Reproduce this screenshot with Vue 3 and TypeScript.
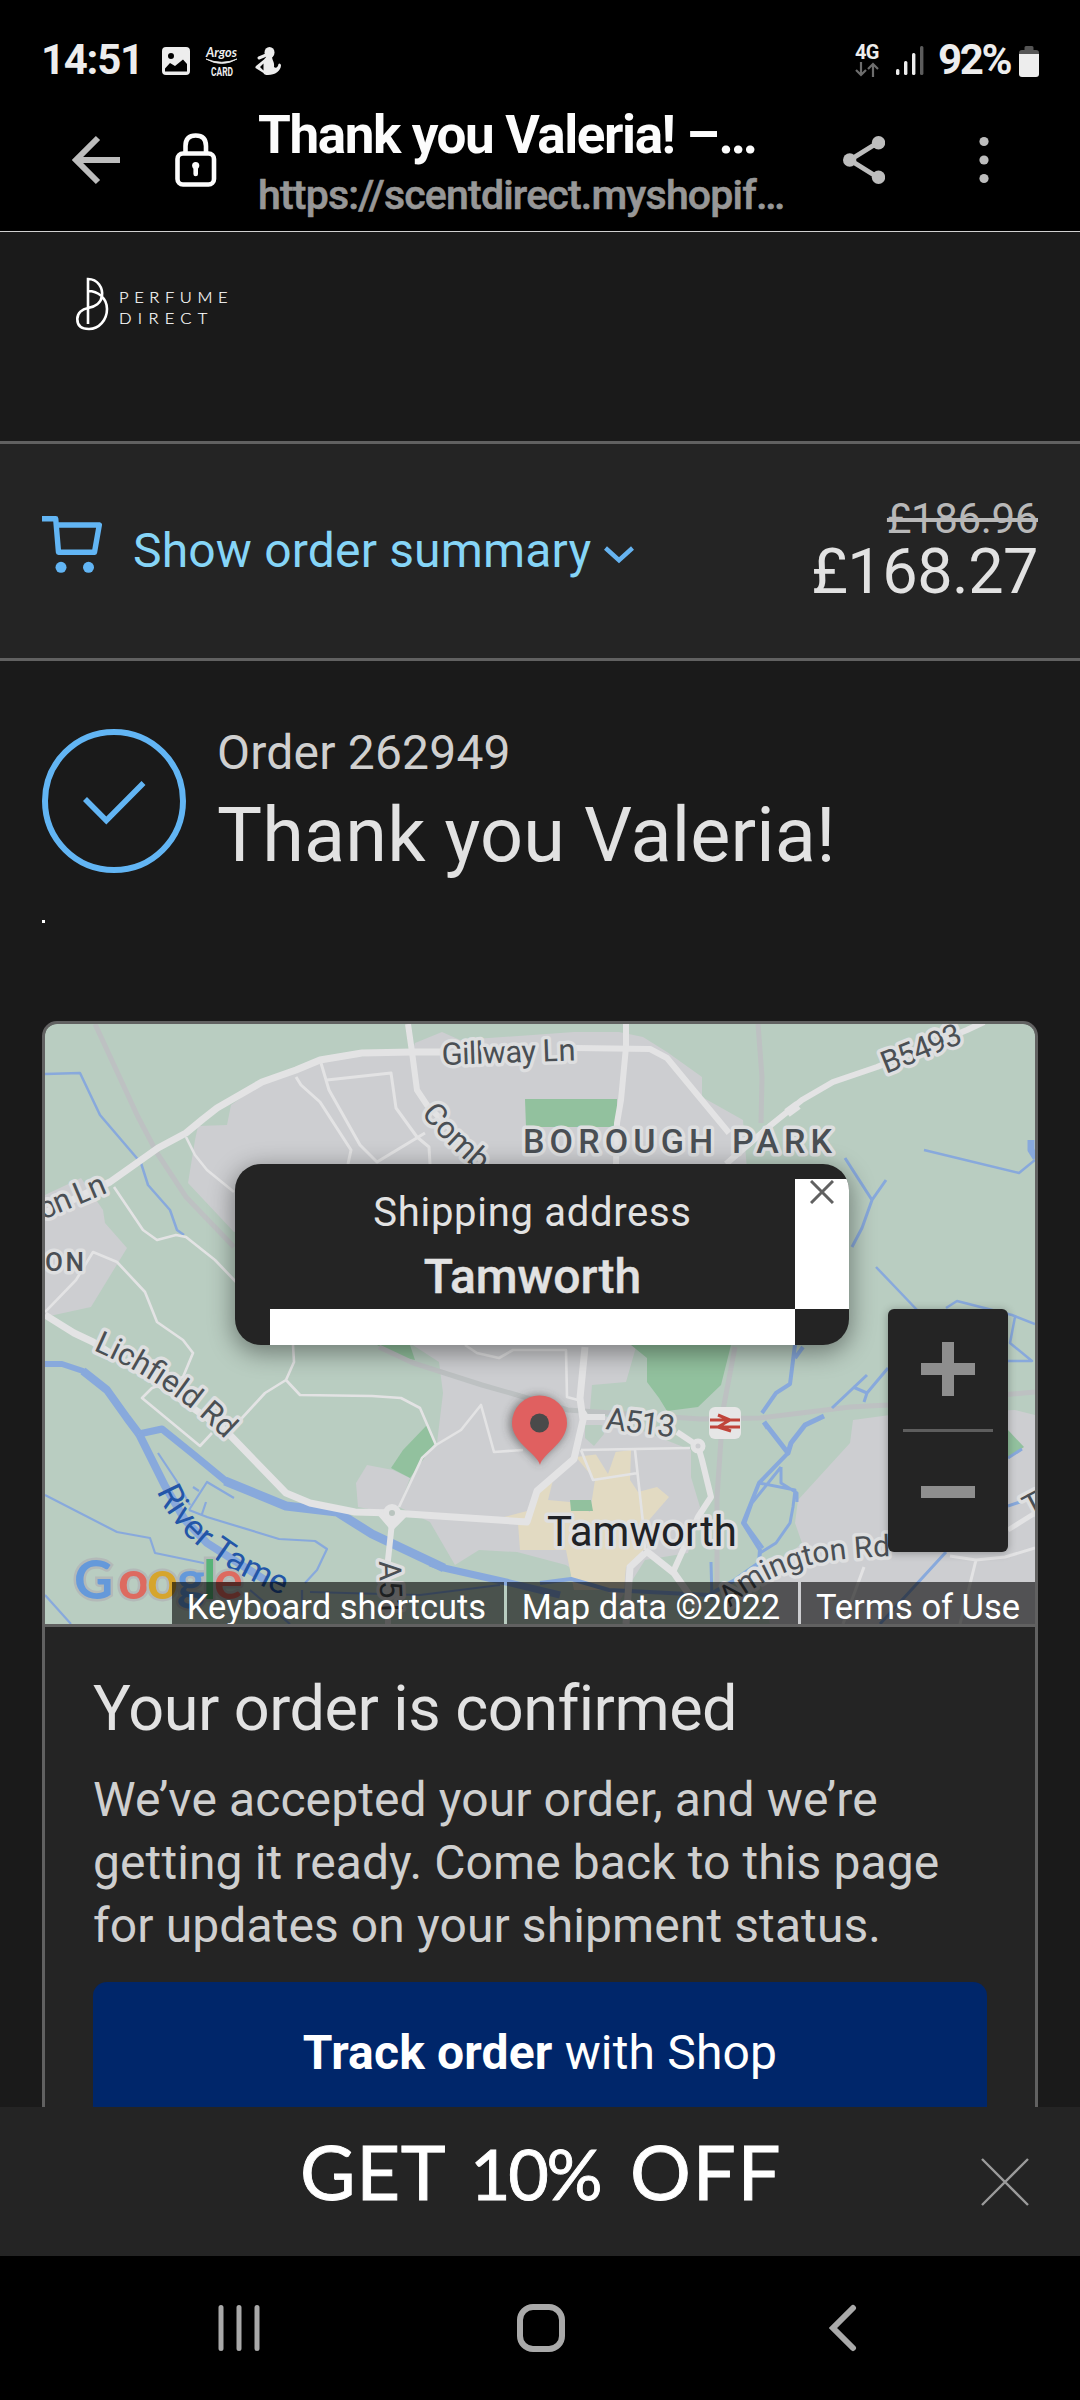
<script setup lang="ts">
interface MapPath {
  d: string
  w: number
}

const areas: string[] = [
  'M415 1043L442 1032L460 1040L574 1032L619 1032L643 1037L667 1052L702 1077L702 1097L743 1120L747 1170L234 1232L188 1183L195 1140L198 1126L227 1125L231 1105L262 1083L321 1060L412 1052Z',
  'M45 1195L81 1178L103 1210L105 1223L127 1248L91 1307L45 1317Z',
  'M405 1340L439 1362L443 1393L437 1443L422 1457L399 1507L430 1522L455 1565L479 1550L517 1552L566 1565L620 1600L645 1560L688 1553L700 1507L691 1477L691 1450L590 1410L592 1385L626 1382L638 1340Z',
  'M356 1483L367 1465L393 1470L410 1478L399 1507L390 1513L358 1507Z',
  'M890 1415L853 1420L850 1443L798 1500L795 1523L802 1543L760 1582L770 1624L1035 1624L1035 1415L1015 1410Z',
]

const parks: string[] = [
  'M525 1099H617V1127H526Z',
  'M377 1345H410L415 1360L400 1357Z',
  'M427 1425L435 1443L410 1478L391 1468L403 1450Z',
  'M631 1345H731L721 1385L698 1407L667 1411L659 1398L647 1382V1358Z',
  'M1008 1430L1024 1447L1008 1458Z',
]

const railways: string[] = [
  'M95 1024L138 1117L157 1153L186 1197L234 1247',
  'M379 1347L413 1363L482 1385L517 1395L568 1410L700 1419L760 1418L850 1407L888 1405L1035 1392',
  'M758 1024L762 1077L761 1123',
  'M735 1347L723 1410L717 1497V1600',
]

const waters: MapPath[] = [
  { d: 'M45 1074L80 1073L100 1115L141 1163L148 1185L170 1210L177 1230L184 1235', w: 2.5 },
  { d: 'M845 1158L872 1200L886 1180M872 1200L862 1228L852 1247', w: 3 },
  { d: 'M924 1150L1019 1173L1035 1160', w: 2.5 },
  { d: 'M1031 1140V1150L1036 1158', w: 7 },
  { d: 'M876 1267L919 1312M946 1308L957 1301L1012 1315L1035 1324M1015 1317L1010 1343L1032 1361H1006', w: 2.5 },
  { d: 'M45 1364H62L83 1371L107 1390L127 1418L139 1434', w: 6 },
  { d: 'M83 1371L107 1390L127 1418L139 1434', w: 8 },
  { d: 'M139 1434L162 1429L193 1454L227 1482L286 1506L337 1512', w: 7 },
  { d: 'M225 1481L286 1506L337 1512L372 1534L444 1568', w: 9 },
  { d: 'M430 1563L444 1568L506 1582L560 1595', w: 7 },
  { d: 'M139 1434L165 1486L185 1520L207 1543L265 1580', w: 8 },
  { d: 'M45 1495L117 1532L150 1538L155 1553L213 1565M45 1595L71 1624', w: 2.2 },
  { d: 'M158 1453L176 1480L190 1505M189 1510L207 1482L234 1498M189 1510L207 1517L279 1539L315 1541L327 1549L317 1570L305 1583M202 1514L206 1502M193 1487L199 1491', w: 2.2 },
  { d: 'M250 1590L290 1624M302 1590V1615M310 1592L420 1595L500 1585', w: 2.2 },
  { d: 'M795 1345L790 1384L776 1393L762 1413M803 1347L795 1358', w: 4 },
  { d: 'M764 1422L788 1453L791 1443L805 1425L824 1416M764 1422L768 1428', w: 5 },
  { d: 'M832 1408L867 1375M888 1368L867 1393L853 1387M867 1393L864 1402', w: 3 },
  { d: 'M788 1453L759 1483L743 1523L760 1550L759 1563L735 1580', w: 4 },
  { d: 'M781 1467V1483L797 1493V1502M759 1483L795 1490L793 1507L790 1523L776 1543L760 1553M781 1467L752 1503L745 1523L763 1548', w: 3 },
  { d: 'M711 1562L712 1600M946 1552L880 1624M1035 1497L1008 1506M1008 1458L1022 1449', w: 3 },
  { d: 'M540 1583L571 1579L609 1590L709 1595L735 1580', w: 4 },
]

const roads: MapPath[] = [
  { d: 'M45 1213L110 1182L158 1148L186 1133L203 1119L217 1108L262 1082L296 1070L320 1060L362 1053L412 1052L444 1052', w: 7 },
  { d: 'M408 1024L412 1052L417 1090L427 1105L487 1166', w: 6 },
  { d: 'M321 1063L329 1090L360 1145L377 1162L425 1133M327 1080L391 1073L396 1108L417 1137L429 1147L430 1164M296 1077L301 1085L320 1102L351 1150L348 1164', w: 3 },
  { d: 'M186 1137L195 1155L207 1170L234 1192M114 1187L143 1230L157 1240L176 1235L186 1237L215 1260L236 1282', w: 2.6 },
  { d: 'M45 1312L76 1280L93 1252L117 1262L145 1292L157 1322L183 1340L193 1353L183 1377L152 1388L142 1398L200 1446L212 1433', w: 2.6 },
  { d: 'M626 1024V1047L621 1100L617 1123L616 1164', w: 6 },
  { d: 'M576 1048L650 1049L667 1058L729 1133', w: 6 },
  { d: 'M726 1164L771 1125L802 1100L833 1082L877 1067L967 1030L984 1022', w: 6 },
  { d: 'M787 1113L798 1105', w: 9 },
  { d: 'M45 1315L74 1333L93 1342L160 1385L227 1432L286 1493L310 1503L355 1512L393 1513L527 1522L537 1491L574 1459L583 1420L580 1398L585 1347', w: 7 },
  { d: 'M393 1513L388 1560V1624M583 1412L586 1417L605 1417M677 1432L698 1446L702 1460L711 1497L698 1517L674 1570', w: 6 },
  { d: 'M380 1513L392 1527L405 1514', w: 6 },
  { d: 'M293 1345L294 1362L286 1380L265 1393L231 1430M286 1380L300 1395L372 1396L401 1398L420 1408L436 1445L422 1458L399 1507M436 1445L461 1430L481 1405L494 1452L523 1450', w: 2.6 },
  { d: 'M465 1345L477 1353L499 1358L513 1350L566 1350L567 1397L578 1400M581 1450L690 1448M635 1450L643 1523L645 1550M581 1450L593 1480L638 1473', w: 2.6 },
  { d: 'M645 1550L674 1573L700 1610M645 1553L630 1567L626 1624', w: 7 },
  { d: 'M1035 1513L1008 1530', w: 5 },
  { d: 'M1035 1548L1005 1557L976 1560L950 1556M976 1560L960 1624M864 1567L843 1624', w: 3 },
]

const signalBars = [
  { x: 0, y: 24, h: 6, on: true },
  { x: 8, y: 16, h: 14, on: true },
  { x: 16, y: 8, h: 22, on: true },
  { x: 24, y: 1, h: 29, on: false },
]

const attribution = ['Keyboard shortcuts', 'Map data ©2022', 'Terms of Use']
</script>

<template>
  <div class="screen">
    <header class="status">
      <span class="time">14:51</span>
      <svg class="s-img" width="28" height="28" viewBox="0 0 28 28">
        <path fill="#ededed" fill-rule="evenodd" d="M4 0H24A4 4 0 0 1 28 4V24A4 4 0 0 1 24 28H4A4 4 0 0 1 0 24V4A4 4 0 0 1 4 0ZM9 6A3 3 0 1 0 9 12A3 3 0 1 0 9 6ZM3 24.500H25V17L21 12.500L13 19L8 16L3 21.500Z" />
      </svg>
      <svg class="s-argos" width="34" height="32" viewBox="0 0 34 32">
        <text x="1" y="12" class="argos" textLength="31" lengthAdjust="spacingAndGlyphs">Argos</text>
        <path d="M1 14Q17 23 32 14Q17 20.500 1 14Z" fill="#eee" stroke="#eee" stroke-width=".8" />
        <text x="6" y="30.500" class="card-t" textLength="22" lengthAdjust="spacingAndGlyphs">CARD</text>
      </svg>
      <svg class="s-fig" width="27" height="28" viewBox="0 0 27 28">
        <ellipse cx="14.500" cy="5.500" rx="5" ry="5.500" fill="#ededed" />
        <path d="M4 11L10 8.500" stroke="#ededed" stroke-width="3" stroke-linecap="round" />
        <path fill="#ededed" fill-rule="evenodd" d="M12 9H17.500C16 12 20 15 19 20C21 22 23 20 23.500 17Q25 15.500 26 18C26 24 20 28 13 28Q9 28 8.500 26L.5 21Q0 20 1 19L9 12.500ZM8.500 16.500L5 20L8.500 23.500Z" />
      </svg>
      <div class="status-right">
        <div class="net">
          <span class="g4">4G</span>
          <svg width="24" height="15" viewBox="0 0 24 15" fill="none" stroke="#6d6d6d" stroke-width="2.200">
            <path d="M6 0V13M1 8L6 13L11 8M18 15V2M13 7L18 2L23 7" />
          </svg>
        </div>
        <svg class="signal" width="28" height="30" viewBox="0 0 28 30">
          <rect v-for="b in signalBars" :key="b.x" :x="b.x" :y="b.y" width="3.400" :height="b.h" rx="1.500" :fill="b.on ? '#ededed' : '#5c5c5c'" />
        </svg>
        <span class="pct">92%</span>
        <svg width="20" height="31" viewBox="0 0 20 31">
          <path d="M0 9V7Q0 4 3 4H5.500V1.500Q5.500 0 7 0H13Q14.500 0 14.500 1.500V4H17Q20 4 20 7V9Z" fill="#555" />
          <path d="M0 8H20V28Q20 31 17 31H3Q0 31 0 28Z" fill="#ededed" />
        </svg>
      </div>
    </header>

    <div class="toolbar">
      <svg class="t-back" width="50" height="50" viewBox="0 0 50 50" fill="none" stroke="#bdbdbd" stroke-width="6">
        <path d="M27 3L5 25L27 47M5 25H49" />
      </svg>
      <svg class="t-lock" width="42" height="54" viewBox="0 0 42 54" fill="none" stroke="#fcfcfc" stroke-width="4.600">
        <rect x="2.500" y="20.500" width="36.500" height="31" rx="5.500" />
        <path d="M10.500 20V13Q10.500 2.500 20.700 2.500Q31 2.500 31 13V20" />
        <circle cx="20.700" cy="32.500" r="3.600" fill="#fcfcfc" stroke="none" />
        <path d="M20.700 33V41" stroke-linecap="round" />
      </svg>
      <div class="titles">
        <span class="title">Thank you Valeria! –…</span>
        <span class="url">https://scentdirect.myshopif…</span>
      </div>
      <svg class="t-share" width="42" height="48" viewBox="0 0 42 48" fill="#bdbdbd">
        <path d="M35 6.500L7 24L35 41.500" fill="none" stroke="#bdbdbd" stroke-width="5" />
        <circle cx="35.500" cy="6.700" r="6.700" /><circle cx="6.700" cy="24" r="6.700" /><circle cx="35.500" cy="41.300" r="6.700" />
      </svg>
      <svg class="t-more" width="10" height="48" viewBox="0 0 10 48" fill="#bdbdbd">
        <circle cx="5" cy="5.500" r="4.600" /><circle cx="5" cy="24" r="4.600" /><circle cx="5" cy="42.500" r="4.600" />
      </svg>
    </div>

    <main class="page">
      <div class="brand">
        <svg width="34" height="54" viewBox="75 277 34 54" fill="none" stroke="#fff" stroke-width="2.600">
          <path d="M88 324V279C98 279 103 288 102 296C101 303 95 307 88 308C82 309 77.300 313 77.300 319C77.300 326 82 329 89 329C99 329 107 320 107 309C107 298 98 291 88 291" />
        </svg>
        <div class="brand-name"><span class="b1">PERFUME</span><span class="b2">DIRECT</span></div>
      </div>

      <section class="summary">
        <svg class="cart" width="60" height="58" viewBox="42 516 60 58" fill="none" stroke="#62b5f4" stroke-width="5.400" stroke-linejoin="round">
          <path d="M42 518.700H55.700L58.500 552.300H94.500L99.300 525H56.500" />
          <circle cx="61" cy="567.300" r="5.500" fill="#62b5f4" stroke="none" /><circle cx="88.500" cy="567.300" r="5.500" fill="#62b5f4" stroke="none" />
        </svg>
        <span class="show">Show order summary</span>
        <svg class="chev" width="30" height="18" viewBox="0 0 30 18" fill="none" stroke="#66b3f0" stroke-width="4.400">
          <path d="M1.500 2L15 14.200L28.500 2" />
        </svg>
        <div class="prices"><s class="old">£186.96</s><span class="new">£168.27</span></div>
      </section>

      <section class="thanks">
        <svg width="144" height="144" viewBox="0 0 144 144" fill="none" stroke="#62b5f4">
          <circle cx="72" cy="72" r="69" stroke-width="6" />
          <path d="M43 70L64.300 91.500L101.500 54" stroke-width="5.600" />
        </svg>
        <div class="thanks-text">
          <span class="order-no">Order 262949</span>
          <h1>Thank you Valeria!</h1>
        </div>
      </section>
      <div class="speck"></div>

      <section class="card">
        <div class="map">
          <svg class="map-art" width="990" height="600" viewBox="45 1024 990 600">
            <defs>
              <path id="lbl-comb" d="M421 1114Q448 1148 500 1190" />
              <path id="lbl-lich" d="M93 1350Q172 1384 234 1448" />
              <path id="lbl-river" d="M157 1491Q182 1560 315 1608" />
              <path id="lbl-aming" d="M730 1608Q772 1566 846 1559T910 1562" />
              <filter id="soft" x="-50%" y="-50%" width="200%" height="200%"><feGaussianBlur stdDeviation="4" /></filter>
            </defs>
            <rect x="45" y="1024" width="990" height="600" fill="#b9cdc1" />
            <path v-for="d in areas" :key="d" :d="d" fill="#cdced1" />
            <path v-for="d in parks" :key="d" :d="d" fill="#92c19e" />
            <path fill="#e2dac2" d="M576 1457L631 1450L630 1480L638 1492L657 1487L669 1497L643 1527L647 1547L626 1567L624 1590H574L566 1550H520L518 1523L504 1517L527 1511L545 1480L553 1480L548 1500L570 1502L590 1512L595 1480Z" />
            <path fill="#cdced1" d="M595 1453L608 1474L616 1451Z" />
            <path fill="#92c19e" d="M570 1500H591L593 1511H571Z" />
            <path fill="#b9cdc1" d="M585 1425L602 1425L604 1434L594 1446L585 1438Z" />
            <path v-for="d in railways" :key="d" :d="d" fill="none" stroke="#bdc1c2" stroke-width="5" />
            <path v-for="p in waters" :key="p.d" :d="p.d" fill="none" stroke="#88a9dc" :stroke-width="p.w" stroke-linejoin="round" />
            <path v-for="p in roads" :key="p.d" :d="p.d" fill="none" stroke="#e3e3e4" :stroke-width="p.w" stroke-linejoin="round" />
            <circle cx="392" cy="1513" r="6" fill="#b9c4bf" stroke="#e3e3e4" stroke-width="6" />
            <circle cx="698" cy="1446" r="5" fill="#cdced1" stroke="#e3e3e4" stroke-width="5" />

            <g class="lbl">
              <text transform="translate(442 1065) rotate(-2)" textLength="134">Gillway Ln</text>
              <text><textPath href="#lbl-comb">Comb</textPath></text>
              <text x="523" y="1153" class="area" font-size="34" textLength="309">BOROUGH PARK</text>
              <text transform="translate(886 1074) rotate(-22)" textLength="84">B5493</text>
              <text transform="translate(43 1220) rotate(-23)" textLength="71">on Ln</text>
              <text x="45" y="1271" class="area" font-size="26" textLength="39">ON</text>
              <text><textPath href="#lbl-lich">Lichfield Rd</textPath></text>
              <text transform="translate(605 1429) rotate(7)" textLength="69">A513</text>
              <text transform="translate(379 1561) rotate(88)">A51</text>
              <text class="aming"><textPath href="#lbl-aming">Amington Rd</textPath></text>
              <text transform="translate(1030 1518) rotate(-28)">T</text>
              <text x="547" y="1546" class="town" textLength="190">Tamworth</text>
            </g>
            <text class="river"><textPath href="#lbl-river">River Tame</textPath></text>

            <rect x="709" y="1407" width="32" height="32" rx="6" fill="#e6e6e6" />
            <path fill="none" stroke="#c0443a" stroke-width="3" d="M710 1420H740M710 1427H740M718 1415L730 1420L718 1427L731 1431" />

            <text class="google" y="1599"><tspan x="74" fill="#6599da">G</tspan><tspan x="118" fill="#dd6a60">o</tspan><tspan x="147" fill="#d6a52d">o</tspan><tspan x="177" fill="#6599da">g</tspan><tspan x="203" fill="#57b377">l</tspan><tspan x="214" fill="#dd6a60">e</tspan></text>

            <path filter="url(#soft)" opacity=".5" fill="#333" d="M539 1465C531 1450 509 1444 509 1424A29 29 0 0 1 567 1424C567 1444 547 1450 539 1465Z" />
            <path fill="#e06060" d="M540 1465C537 1453 512 1443 512 1423A27.500 27.500 0 0 1 567 1423C567 1443 543 1453 540 1465Z" />
            <circle cx="539.500" cy="1423" r="9.500" fill="#4a4a4a" />
          </svg>

          <div class="popup">
            <div class="popup-main"><span class="p1">Shipping address</span><span class="p2">Tamworth</span></div>
            <div class="popup-side">
              <svg width="24" height="24" viewBox="0 0 24 24" stroke="#616161" stroke-width="3"><path d="M1 1L23 23M23 1L1 23" /></svg>
            </div>
            <div class="popup-strip"></div>
          </div>

          <div class="zoom">
            <svg width="54" height="54" viewBox="0 0 54 54" fill="#8e8e8e"><path d="M0 21H21V0H33V21H54V33H33V54H21V33H0Z" /></svg>
            <i></i>
            <svg width="54" height="12" viewBox="0 0 54 12"><path d="M0 0H54V12H0Z" fill="#8e8e8e" /></svg>
          </div>

          <div class="attrib"><span v-for="(a, i) in attribution" :key="a" :class="'a' + i">{{ a }}</span></div>
        </div>

        <div class="card-body">
          <h2>Your order is confirmed</h2>
          <p>We’ve accepted your order, and we’re<br />getting it ready. Come back to this page<br />for updates on your shipment status.</p>
          <button class="track"><span><b>Track order</b> with Shop</span></button>
        </div>
      </section>
    </main>

    <section class="promo">
      <span class="w1">GET</span><span class="w2">10%</span><span class="w3">OFF</span>
      <svg width="48" height="48" viewBox="0 0 48 48" stroke="#9b9b9b" stroke-width="2.400"><path d="M1 1L47 47M47 1L1 47" /></svg>
    </section>

    <nav class="nav">
      <svg width="42" height="48" viewBox="0 0 42 48" stroke="#a9a9a9" stroke-width="5" stroke-linecap="round"><path d="M3 3.500V44.500M21 3.500V44.500M39 3.500V44.500" /></svg>
      <svg class="home" width="50" height="50" viewBox="0 0 50 50" fill="none" stroke="#a9a9a9" stroke-width="6"><rect x="4" y="4" width="42" height="42" rx="13" /></svg>
      <svg width="28" height="48" viewBox="0 0 28 48" fill="none" stroke="#a9a9a9" stroke-width="6" stroke-linecap="round"><path d="M24 4L4 24L24 44" /></svg>
    </nav>
  </div>
</template>

<style>
body {
  background: #000;
}
</style>

<style scoped>
.screen {
  width: 1080px;
  height: 2400px;
  overflow: hidden;
  display: flex;
  flex-direction: column;
  background: #000;
  font-family: Roboto, sans-serif;
  color: #e2e2e2;
}
svg {
  display: block;
  flex: none;
}
span, h1, h2, s {
  white-space: nowrap;
}
.status {
  flex: none;
  box-sizing: border-box;
  height: 100px;
  padding: 20px 41px 0 41px;
  display: flex;
  align-items: center;
  color: #ededed;
  font-weight: 700;
}
.status > *, .status-right { flex: none; }
.time { font-size: 42px; line-height: 80px; letter-spacing: -1.300px; width: 121px; }
.s-img { margin-top: 2px; }
.s-argos { margin: 2px 0 0 15px; overflow: visible; }
.s-fig { margin: 2px 0 0 16px; }
.argos { font: italic 700 13px Lato, sans-serif; fill: #eee; }
.card-t { font: 700 12px Roboto, sans-serif; fill: #eee; }
.status-right { margin-left: auto; display: flex; align-items: center; }
.net { width: 41px; height: 33px; display: flex; flex-direction: column; gap: 1px; margin-top: 1px; }
.g4 { font-size: 20px; line-height: 17px; letter-spacing: -.6px; }
.signal { width: 28px; margin-right: 14px; }
.pct { font-size: 42px; line-height: 80px; letter-spacing: -2.300px; width: 81px; }
.status-right > svg:last-child { margin-top: 2px; }
.toolbar {
  flex: none;
  box-sizing: border-box;
  height: 132px;
  padding: 5px 0 0 71px;
  border-bottom: 1px solid #d0d0d0;
  display: flex;
}
.toolbar > svg { align-self: flex-start; }
.t-back { margin-top: 30px; }
.t-lock { margin: 28px 0 0 54px; }
.titles { display: flex; flex-direction: column; width: 540px; margin-left: 41px; }
.title { font-size: 53px; line-height: 60px; font-weight: 700; color: #fcfcfc; letter-spacing: -1.400px; }
.url { font-size: 41px; line-height: 60px; font-weight: 500; color: #979797; letter-spacing: -.8px; -webkit-text-stroke: .6px #979797; }
.t-share { margin: 31px 0 0 45px; }
.t-more { margin: 31px 0 0 94px; }

.page {
  flex: none;
  height: 1875px;
  overflow: hidden;
  background: #1a1a1a;
  display: flex;
  flex-direction: column;
}
.brand { flex: none; height: 209px; display: flex; box-sizing: border-box; padding: 45px 0 0 75px; gap: 10px; }
.brand-name { display: flex; flex-direction: column; padding-top: 10px; font: 300 16.500px/21.300px Lato, sans-serif; color: #fff; -webkit-text-stroke: .2px #fff; }
.b1 { letter-spacing: 5.600px; }
.b2 { letter-spacing: 6.300px; }
.summary {
  flex: none;
  box-sizing: border-box;
  height: 220px;
  border-top: 3px solid #616161;
  border-bottom: 3px solid #616161;
  background: #242424;
  padding: 0 42px;
  display: flex;
  align-items: flex-start;
}
.cart { margin-top: 72px; }
.show { font-size: 48px; line-height: 60px; color: #86d5f7; margin: 77px 0 0 31px; width: 455px; letter-spacing: .18px; }
.chev { margin: 102px 0 0 16px; }
.prices { margin-left: auto; display: flex; flex-direction: column; align-items: flex-end; padding-top: 49px; }
.old { font-size: 42px; line-height: 52px; color: #b8b8b8; text-decoration-thickness: 4px; letter-spacing: -.35px; }
.new { font-size: 63px; line-height: 53px; letter-spacing: -.5px; }
.thanks { flex: none; display: flex; padding: 68px 0 0 42px; gap: 31px; height: 144px; }
.thanks-text { display: flex; flex-direction: column; }
.order-no { font-size: 48px; line-height: 48px; color: #d0d0d0; letter-spacing: .2px; }
h1 { margin: 0; font-size: 75.600px; font-weight: 400; line-height: 116px; letter-spacing: .15px; }
.speck { flex: none; width: 3px; height: 3px; background: #fff; margin: 47px 0 98px 42px; }
.card {
  flex: none;
  box-sizing: border-box;
  width: 996px;
  height: 1200px;
  margin-left: 42px;
  border: 3px solid #616161;
  border-radius: 15px;
  background: #242424;
  overflow: hidden;
}
.map { position: relative; height: 600px; border-bottom: 3px solid #616161; overflow: hidden; }
.map-art { position: absolute; inset: 0; }
.lbl text {
  font-family: Roboto, sans-serif;
  font-size: 31px;
  fill: #4a4f54;
  stroke: #dedfe0;
  stroke-width: 7px;
  stroke-linejoin: round;
  paint-order: stroke;
}
.lbl text.area { font-weight: 500; font-size: revert-layer; }
.lbl text.town { font-size: 42px; fill: #202226; }
.lbl text.aming { font-size: 30px; }
.river { font: 34px Roboto, sans-serif; fill: #2356a8; }
.google { font: 700 54px Lato, sans-serif; stroke: #b3b9b8; stroke-width: 5px; paint-order: stroke; }
.popup {
  position: absolute;
  left: 190px;
  top: 140px;
  width: 614px;
  height: 181px;
  border-radius: 26px;
  background: #242424;
  box-shadow: 0 6px 24px 2px rgba(0, 0, 0, .4);
  display: grid;
  grid-template-columns: 560px 54px;
  grid-template-rows: 145px 36px;
  overflow: hidden;
}
.popup-main { display: flex; flex-direction: column; align-items: center; padding: 17px 0 0 35px; }
.p1 { font-size: 40px; line-height: 64px; letter-spacing: .7px; }
.p2 { font-size: 48px; line-height: 64px; font-weight: 500; -webkit-text-stroke: .4px #e2e2e2; }
.popup-side { background: #fff; margin-top: 15px; padding: 1px 0 0 15px; }
.popup-strip { background: #fff; margin-left: 35px; }
.zoom {
  position: absolute;
  left: 843px;
  top: 285px;
  width: 120px;
  height: 243px;
  box-sizing: border-box;
  padding-top: 33px;
  border-radius: 6px;
  background: #242424;
  box-shadow: 0 1px 8px rgba(0, 0, 0, .3);
  display: flex;
  flex-direction: column;
  align-items: center;
}
.zoom i { width: 90px; height: 3px; background: #5e5e5e; margin: 33px 0 54px; }
.attrib { position: absolute; right: 0; bottom: 0; height: 42px; display: flex; gap: 3px; overflow: hidden; }
.attrib span {
  box-sizing: border-box;
  background: rgba(0, 0, 0, .6);
  color: #fff;
  font-size: 34.500px;
  line-height: 50px;
  text-align: center;
  width: 332px;
  padding-right: 3px;
}
.attrib .a1 { width: 291px; }
.attrib .a2 { width: 234px; padding: 0; }
.card-body { padding: 50px 48px 0; }
h2 { margin: 0; font-size: 63px; font-weight: 400; line-height: 64px; letter-spacing: -.52px; }
p { margin: 27px 0 0; font-size: 48px; line-height: 63px; color: #cfcfcf; white-space: nowrap; letter-spacing: .1px; }
.track {
  display: block;
  width: 894px;
  height: 160px;
  margin-top: 25px;
  padding: 0;
  border: 0;
  border-radius: 14px;
  background: #00266a;
  color: #fff;
  font: 400 48px/142px Roboto, sans-serif;
  letter-spacing: .16px;
}
.track span { display: block; height: 160px; }
.promo {
  flex: none;
  height: 149px;
  background: #242424;
  display: flex;
  color: #fff;
  font: 400 76px/128px Lato, sans-serif;
  padding-left: 300px;
  -webkit-text-stroke: .9px #fff;
}
.promo .w1 { width: 170px; letter-spacing: .7px; }
.promo .w2 { width: 160px; font-size: 70px; line-height: 133px; letter-spacing: -2.400px; }
.promo .w3 { width: 351px; letter-spacing: 1.800px; }
.promo svg { margin-top: 51px; }
.nav { flex: none; height: 144px; box-sizing: border-box; padding: 0 223px 0 218px; display: flex; align-items: center; justify-content: space-between; }
.home { margin-right: 7px; }
</style>
